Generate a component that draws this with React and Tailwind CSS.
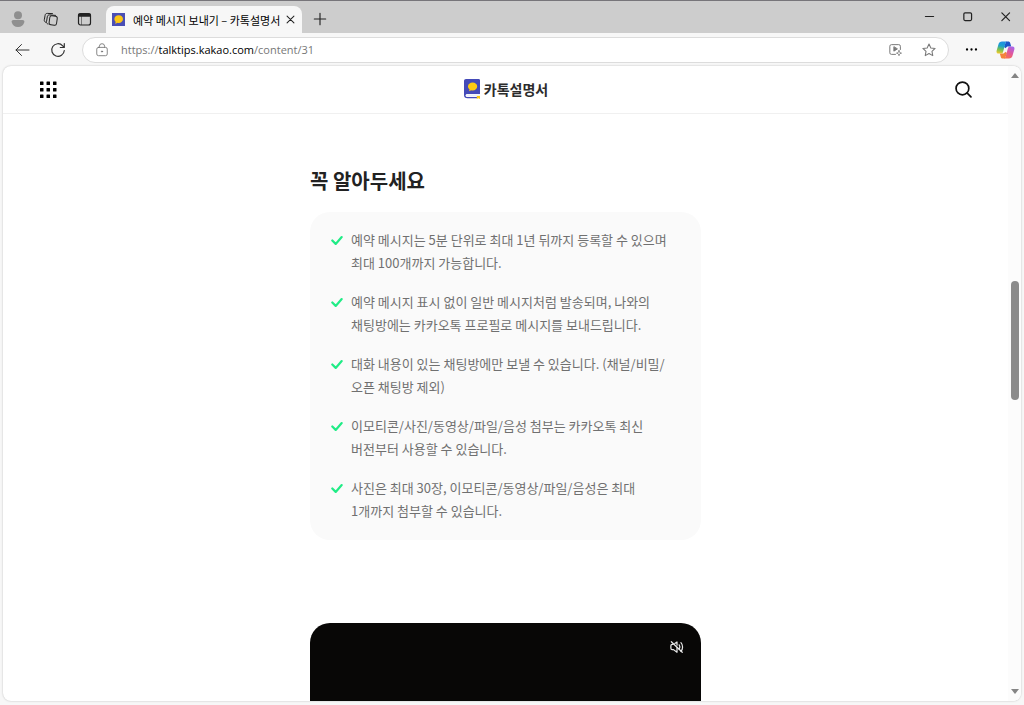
import React from "react";

const notes = [
  ["예약 메시지는 5분 단위로 최대 1년 뒤까지 등록할 수 있으며", "최대 100개까지 가능합니다."],
  ["예약 메시지 표시 없이 일반 메시지처럼 발송되며, 나와의", "채팅방에는 카카오톡 프로필로 메시지를 보내드립니다."],
  ["대화 내용이 있는 채팅방에만 보낼 수 있습니다. (채널/비밀/", "오픈 채팅방 제외)"],
  ["이모티콘/사진/동영상/파일/음성 첨부는 카카오톡 최신", "버전부터 사용할 수 있습니다."],
  ["사진은 최대 30장, 이모티콘/동영상/파일/음성은 최대", "1개까지 첨부할 수 있습니다."],
];

const Line = ({ size = 16, width = 1, className = "", children }) => (
  <svg
    width={size}
    height={size}
    viewBox="0 0 16 16"
    fill="none"
    stroke="currentColor"
    strokeWidth={width}
    strokeLinecap="round"
    strokeLinejoin="round"
    className={`shrink-0 ${className}`}
    aria-hidden="true"
  >
    {children}
  </svg>
);

const Favicon = () => (
  <svg width="13" height="13" viewBox="0 0 13 13" className="shrink-0" aria-hidden="true">
    <rect width="13" height="13" fill="#4a4fb5" />
    <path d="M6.700 2.200c2.500 0 4.300 1.600 4.300 3.800S9.200 10 6.700 10c-.5 0-.9 0-1.300-.2L3.200 11l.5-2.200C2.800 8.100 2.400 7.200 2.400 6c0-2.200 1.800-3.800 4.300-3.800z" fill="#fcc613" />
  </svg>
);

const BookLogo = () => (
  <svg width="17" height="20" viewBox="0 0 17 20" className="shrink-0" aria-hidden="true">
    <path d="M2 0h12.500c1 0 1.500.5 1.500 1.500V15H3.500C2.300 15 1.500 15.600 1.500 16.500S2.300 18 3.500 18H13v1.200H3.500C1.300 19.200 0 18 0 16.200V2C0 .8.800 0 2 0z" fill="#444ab8" />
    <path d="M3.500 15.500H16V17.500H3.500c-1.300 0-1.300-2 0-2z" fill="#eceef8" />
    <path d="M8.600 3.600c2.600 0 4.600 1.700 4.600 3.900s-2 4-4.600 4c-.5 0-1 0-1.400-.2l-2.100 1 .4-2C4.500 9.600 4 8.700 4 7.500c0-2.200 2-3.900 4.600-3.900z" fill="#fdca12" />
    <path d="M12.800 17h3.200v3l-1.600-.8-1.600.8z" fill="#fdca12" />
  </svg>
);

const Copilot = () => (
  <svg width="19" height="18" viewBox="0 0 19 18" aria-hidden="true">
    <defs>
      <linearGradient id="cpLeft" x1="0.5" y1="0" x2="0.3" y2="1">
        <stop offset="0" stopColor="#1f8fe2" />
        <stop offset="0.35" stopColor="#1ba0cf" />
        <stop offset="0.65" stopColor="#6fbf58" />
        <stop offset="1" stopColor="#f3cb2b" />
      </linearGradient>
      <linearGradient id="cpRight" x1="0.8" y1="0" x2="0.3" y2="1">
        <stop offset="0" stopColor="#a565ee" />
        <stop offset="0.5" stopColor="#df569f" />
        <stop offset="1" stopColor="#fa704c" />
      </linearGradient>
    </defs>
    <path d="M10 .5h2.300c1 0 1.600.5 1.900 1.500l1 3.500h-3c-1.300 0-2 .6-2.300 1.800L8 6z" fill="#1b55c8" />
    <path d="M9 17.500H6.700c-1 0-1.600-.5-1.900-1.500l-1-3.500h3c1.300 0 2-.6 2.300-1.800L11 12z" fill="#f4843a" />
    <path d="M6 .5h5c-1 .4-1.400 1.200-1.700 2.200L7 11c-.3 1-1 1.600-2.200 1.600H2.500C.9 12.600.2 11.300.6 9.700l1.900-6.500C3 1.500 4.200.5 6 .5z" fill="url(#cpLeft)" />
    <path d="M13 17.500H8c1-.4 1.400-1.200 1.700-2.200L12 7c.3-1 1-1.600 2.200-1.600h2.300c1.600 0 2.300 1.300 1.900 2.900l-1.900 6.500c-.5 1.700-1.700 2.700-3.500 2.700z" fill="url(#cpRight)" />
  </svg>
);

const TabStrip = () => (
  <div className="flex h-[33px] shrink-0 items-end border-t border-[#77757a] bg-[#cdcdcd] text-[#222]">
    <div className="flex h-7 w-[106px] items-center gap-[17px] pl-[10px]">
      <button aria-label="Profile">
        <svg width="16" height="16" viewBox="0 0 16 16" fill="#8f8f8f" aria-hidden="true">
          <circle cx="8" cy="4.200" r="4" />
          <path d="M3.500 9h9c1.500 0 2.200 1 1.800 2.300C13.500 14.500 11.300 16 8 16s-5.500-1.500-6.300-4.700C1.300 10 2 9 3.500 9z" />
        </svg>
      </button>
      <button aria-label="Workspaces">
        <Line>
          <rect x="6.500" y="5" width="7.500" height="9" rx="2" transform="rotate(8 10 9)" />
          <path d="M5 13C3.700 12.700 3.300 11.900 3.500 10.700l.8-4.900c.2-1.300 1-2 2.300-1.900l5.900.5" />
          <path d="M2.600 11.300C1.500 10.700 1.100 9.900 1.300 8.800l.8-4.500C2.300 3 3.100 2.300 4.400 2.400l5.100.2" />
        </Line>
      </button>
      <button aria-label="Tab actions">
        <Line width={1.200}>
          <rect x="2.500" y="2.500" width="12" height="11.500" rx="2" />
          <path d="M3.200 3.500h10.600M3.200 4.600h10.600" strokeWidth="2.200" />
          <path d="M5.500 5v8.500" strokeWidth="0.500" />
        </Line>
      </button>
    </div>
    <div className="flex h-[27px] w-[196px] items-center rounded-t-lg bg-[#f7f7f7] px-[6px]">
      <Favicon />
      <span className="ml-2 flex-1 text-[11px] leading-4 whitespace-nowrap text-black">
        예약 메시지 보내기 – 카톡설명서
      </span>
      <button aria-label="Close tab">
        <Line size={11} width={1.500}>
          <path d="M3 3l10 10M13 3L3 13" />
        </Line>
      </button>
    </div>
    <button aria-label="New tab" className="flex h-7 w-9 items-center justify-center">
      <Line size={14} width={1.300}>
        <path d="M8 1.500v13M1.500 8h13" />
      </Line>
    </button>
    <div className="mb-[3px] ml-auto flex h-7 items-center gap-[25px] pr-3">
      <button aria-label="Minimize">
        <Line size={13} width={1.500}>
          <path d="M3 8h10" />
        </Line>
      </button>
      <button aria-label="Maximize">
        <Line size={13} width={1.500}>
          <rect x="3.500" y="3.500" width="9.500" height="9.500" rx="1.500" />
        </Line>
      </button>
      <button aria-label="Close">
        <Line size={13} width={1.500}>
          <path d="M3.500 3.500l9.500 9.500M13 3.500l-9.500 9.500" />
        </Line>
      </button>
    </div>
  </div>
);

const Toolbar = () => (
  <div className="flex h-[33px] shrink-0 items-center pr-[9px] pl-[14px] text-[#333]">
    <button aria-label="Back">
      <Line>
        <path d="M15 8H2M7.500 2.500L2 8l5.500 5.500" />
      </Line>
    </button>
    <button aria-label="Refresh" className="ml-5">
      <Line width={1.200}>
        <path d="M14.300 8.500A6.300 6.300 0 1 1 12.700 3.800L14 5.200M14.300 1.500v4h-4" />
      </Line>
    </button>
    <div className="ml-4 flex h-[26px] flex-1 items-center rounded-full border border-[#dcdcdc] bg-white px-3 text-[#777]">
      <Line size={14}>
        <rect x="2" y="5" width="12" height="9.500" rx="2" />
        <path d="M5 5V3.800a3 3 0 0 1 6 0V5" />
        <circle cx="8" cy="9.700" r="0.700" fill="currentColor" />
      </Line>
      <a
        href="https://talktips.kakao.com/content/31"
        className="ml-3 flex-1 font-['Open_Sans','Noto_Sans',sans-serif] text-[11px] leading-4"
      >
        https://<span className="text-black">talktips.kakao.com</span>/content/31
      </a>
      <button aria-label="Media" className="mr-5">
        <Line size={13} width={1.200}>
          <path d="M8 14H3a2 2 0 0 1-2-2V4a2 2 0 0 1 2-2h9a2 2 0 0 1 2 2v4" />
          <path d="M6 5v5l4-2.500z" fill="currentColor" />
          <path d="M12.300 9.500c.3 1.900 1 2.600 3 3-2 .4-2.700 1.100-3 3-.3-1.900-1-2.600-3-3 2-.4 2.700-1.100 3-3z" />
        </Line>
      </button>
      <button aria-label="Add to favorites">
        <Line size={14} width={1.200}>
          <path d="M8 1.200l2.100 4.400 4.900.6-3.600 3.300.9 4.900L8 12.100l-4.300 2.300.9-4.900L1 6.200l4.900-.6z" />
        </Line>
      </button>
    </div>
    <button aria-label="Settings and more" className="ml-4 text-black">
      <Line size={13}>
        <g fill="currentColor" stroke="none">
          <circle cx="2.500" cy="8" r="1.400" />
          <circle cx="8" cy="8" r="1.400" />
          <circle cx="13.500" cy="8" r="1.400" />
        </g>
      </Line>
    </button>
    <button aria-label="Copilot" className="ml-[18px]">
      <Copilot />
    </button>
  </div>
);

const Header = () => (
  <header className="flex h-12 items-center justify-between border-b border-[#f0f0f0] px-9">
    <button aria-label="메뉴">
      <svg width="18" height="18" viewBox="0 0 18 18" aria-hidden="true">
        {[0.5, 7, 13.5].map((y) =>
          [1, 7.5, 14].map((x) => (
            <rect key={`${x}-${y}`} x={x} y={y} width="3.500" height="3.500" rx="0.500" />
          ))
        )}
      </svg>
    </button>
    <a href="#home" className="flex items-center gap-[3px] pb-[2px] text-[14px] leading-5 font-bold text-[#2c2c2c]">
      <BookLogo />
      카톡설명서
    </a>
    <button aria-label="검색">
      <Line size={17} width={1.600} className="text-[#111]">
        <circle cx="7" cy="7" r="6" />
        <path d="M11.500 11.500l3.500 3.500" />
      </Line>
    </button>
  </header>
);

const Note = ({ lines }) => (
  <li className="flex gap-2">
    <svg width="12" height="23" viewBox="0 0 12 23" fill="none" className="shrink-0" aria-hidden="true">
      <path d="M1.300 12.500l3.400 3.400 6-6.800" stroke="#20ec86" strokeWidth="2.200" strokeLinecap="round" strokeLinejoin="round" />
    </svg>
    <p className="whitespace-nowrap">
      {lines[0]}
      <br />
      {lines[1]}
    </p>
  </li>
);

const Video = () => (
  <div className="mt-[83px] flex h-[320px] items-start justify-end rounded-[20px] bg-[#080706] p-[17px]">
    <button aria-label="음소거 해제" className="text-[#e8e8e8]">
      <Line size={14} width={1.400}>
        <path d="M3.500 5H2.500A1.500 1.500 0 0 0 1 6.500v3A1.500 1.500 0 0 0 2.500 11H4l4 3V8.500M5.500 4L8 2.300V6" />
        <path d="M10.500 5.500c1 1.500 1 3.500 0 5M12.500 3c2.500 2.500 2.500 7.500 0 10" />
        <path d="M1.500 2l12.500 12" />
      </Line>
    </button>
  </div>
);

/// scrollbar
const Scrollbar = () => (
  <div className="flex w-[13px] shrink-0 flex-col items-center bg-[#fcfcfc] py-[7px]">
    <svg width="8" height="5" viewBox="0 0 8 5" fill="#858585" aria-hidden="true">
      <path d="M4 0l4 5H0z" />
    </svg>
    <div className="flex min-h-0 flex-1 flex-col">
      <div className="grow-[203]" />
      <div className="w-2 grow-[118] rounded-full bg-[#8b8b8b]" />
      <div className="grow-[289]" />
    </div>
    <svg width="8" height="5" viewBox="0 0 8 5" fill="#858585" aria-hidden="true">
      <path d="M4 5l4-5H0z" />
    </svg>
  </div>
);

const App = () => {
  return (
    <div className="flex h-screen flex-col overflow-hidden bg-[#f7f7f7] font-['Noto_Sans_CJK_KR',sans-serif]">
      <TabStrip />
      <Toolbar />
      <div className="mx-[3px] mb-1 flex min-h-0 flex-1 overflow-hidden rounded-lg bg-white shadow-[0_0_2px_rgba(0,0,0,0.25)]">
        <div className="min-w-0 flex-1 overflow-hidden">
          <Header />
          <main className="mx-auto w-full max-w-[391px] pt-[53px]">
            <h1 className="text-[20px] leading-7 font-bold text-[#222]">꼭 알아두세요</h1>
            <ul className="mt-[17px] flex flex-col gap-4 rounded-[20px] bg-[#fafafa] px-[21px] pt-4 pb-[18px] text-[13px] leading-[23px] text-[#707070]">
              {notes.map((lines, i) => (
                <Note key={i} lines={lines} />
              ))}
            </ul>
            <Video />
          </main>
        </div>
        <Scrollbar />
      </div>
    </div>
  );
};

export default App;
